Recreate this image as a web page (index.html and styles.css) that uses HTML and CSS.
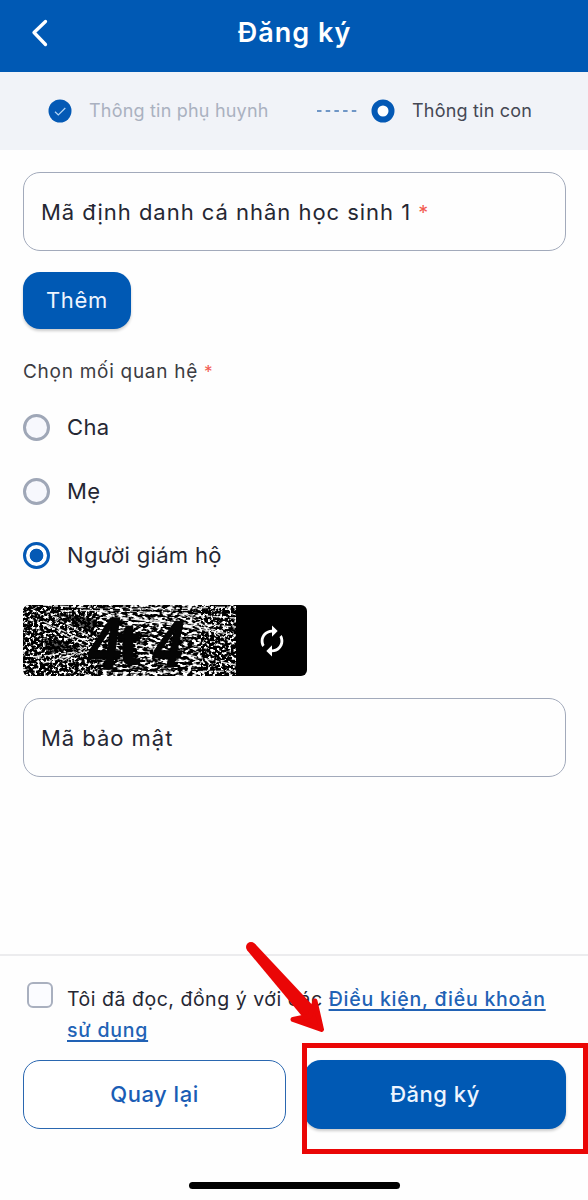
FILE: index.html
```html
<!DOCTYPE html>
<html lang="vi">
<head>
<meta charset="utf-8">
<title>Đăng ký</title>
<link rel="stylesheet" href="styles.css">
</head>
<body>
<div class="screen">
  <header class="topbar">
    <svg class="back" viewBox="0 0 20 30" aria-label="Quay lại"><path d="M16.500 3.500 5 14.500l11.500 12"/></svg>
    <h1 class="title">Đăng ký</h1>
  </header>

  <nav class="steps">
    <svg class="step-icon" viewBox="0 0 24 24"><circle cx="12" cy="12" r="11.500" fill="#0459b5"/><path d="m7 12.800 3.300 3.200 7-7" fill="none" stroke="#b5d6f5" stroke-width="1.200"/></svg>
    <span class="step-label done">Thông tin phụ huynh</span>
    <svg class="dashes" viewBox="0 0 40 2"><path d="M0 1h40" stroke="#4478b5" stroke-width="1.500" stroke-dasharray="4.500 4.200"/></svg>
    <svg class="step-icon" viewBox="0 0 24 24"><circle cx="12" cy="12" r="8.500" fill="#fff" stroke="#0459b5" stroke-width="6"/></svg>
    <span class="step-label">Thông tin con</span>
  </nav>

  <main class="form">
    <div class="field"><span class="field-label">Mã định danh cá nhân học sinh 1 <span class="req">*</span></span></div>
    <button class="btn add">Thêm</button>
    <p class="group-label">Chọn mối quan hệ <span class="req">*</span></p>
    <div class="radios">
      <div class="radio"><i class="dot"></i><span>Cha</span></div>
      <div class="radio"><i class="dot"></i><span>Mẹ</span></div>
      <div class="radio"><i class="dot checked"></i><span>Người giám hộ</span></div>
    </div>
    <div class="captcha">
      <svg class="captcha-image" viewBox="0 0 213 71">
        <defs>
          <filter id="grain" x="0" y="0" width="100%" height="100%" color-interpolation-filters="sRGB">
            <feTurbulence type="fractalNoise" baseFrequency="0.34 0.36" numOctaves="2" seed="8"/>
            <feColorMatrix values="7 0 0 0 -3.500  7 0 0 0 -3.500  7 0 0 0 -3.500  0 0 0 0 1"/>
          </filter>
          <filter id="streaks" x="0" y="0" width="100%" height="100%" color-interpolation-filters="sRGB">
            <feTurbulence type="fractalNoise" baseFrequency="0.2 0.4" numOctaves="2" seed="3"/>
            <feColorMatrix values="6 0 0 0 -2.700  6 0 0 0 -2.700  6 0 0 0 -2.700  0 0 0 0 1"/>
          </filter>
        </defs>
        <rect width="213" height="71" filter="url(#grain)"/>
        <rect x="74" width="104" height="71" filter="url(#streaks)"/>
        <path class="shadows" d="M34 8 74 14 70 28zM20 34 56 42 24 50z"/>
        <path class="scratches" d="M20 0 213 13M40 6 213 2M60 4 200 26M20 16 66 38M28 10 70 34M10 52 62 46M40 56 72 36M24 20 64 42M80 12 213 22M110 14 213 30M20 58 66 46M90 68 213 66M115 40 213 60M160 8 213 40"/>
        <path class="gaps" d="M30 3 213 8M32 10 72 28M20 44 62 41M88 66 205 62M170 22 206 38M24 30 64 52"/>
        <g class="code">
          <text transform="translate(63 64) skewX(-8) scale(.78 1)" font-size="74">4</text>
          <text transform="translate(95 59) scale(1.150 1)" font-size="58">t</text>
          <text transform="translate(127 62) skewX(-12) scale(.78 1)" font-size="66">4</text>
        </g>
      </svg>
      <div class="refresh">
        <svg viewBox="0 0 24 24"><path d="M12 6v3l4-4-4-4v3c-4.420 0-8 3.580-8 8 0 1.570.46 3.030 1.240 4.260L6.700 14.800C6.250 13.970 6 13.010 6 12c0-3.310 2.690-6 6-6zm6.760 1.740L17.300 9.200c.44.84.7 1.790.7 2.800 0 3.310-2.690 6-6 6v-3l-4 4 4 4v-3c4.420 0 8-3.580 8-8 0-1.570-.46-3.030-1.240-4.260z"/></svg>
      </div>
    </div>
    <div class="field"><span class="field-label">Mã bảo mật</span></div>
  </main>

  <footer class="footer">
    <div class="terms">
      <i class="checkbox"></i>
      <p class="terms-text">Tôi đã đọc, đồng ý với các <a class="link">Điều kiện, điều khoản</a><br><a class="link">sử dụng</a></p>
    </div>
    <div class="actions">
      <button class="btn outline">Quay lại</button>
      <button class="btn primary">Đăng ký</button>
    </div>
    <div class="home-indicator"></div>
  </footer>

  <svg class="arrow" viewBox="0 0 90 104"><circle cx="11" cy="12" r="5"/><path d="M7.300 15.500 66 86 78 76 14.700 8.500z"/><path class="head" d="M53 84.500 81.500 94.500 75 66 70 81z"/></svg>
  <div class="highlight"></div>
</div>
</body>
</html>
```
FILE: styles.css
```css
* { box-sizing: border-box; }
body { margin: 0; background: #fefefe; font-family: Inter, "Noto Sans", sans-serif; color: #252733; }
.screen { position: relative; width: 588px; height: 1200px; display: flex; flex-direction: column; overflow: hidden; }
p, h1 { margin: 0; }

.topbar { height: 72px; flex: none; display: grid; grid-template-columns: 60px 1fr 60px; align-items: center; padding-bottom: 7px; background: #0059b4; color: #fff; }
.back { width: 20px; height: 30px; margin-left: 29px; fill: none; stroke: #fff; stroke-width: 3.300; stroke-linecap: round; stroke-linejoin: round; }
.title { padding-left: 1px; text-align: center; font-size: 27px; font-weight: 600; letter-spacing: 1px; line-height: 34px; }

.steps { height: 78px; flex: none; display: flex; align-items: center; padding-left: 48px; background: #f1f3f8; }
.step-icon { width: 24px; height: 24px; flex: none; }
.step-label { margin-left: 17px; padding-bottom: 2px; font-size: 18px; letter-spacing: .2px; white-space: nowrap; color: #454854; }
.step-label.done { width: 211px; color: #aab1c0; }
.dashes { width: 40px; height: 2px; margin: 0 14px 0 17px; }

.form { flex: 1; padding: 22px 22px 0 23px; }
.field { height: 79px; display: flex; align-items: center; padding: 0 0 0 17px; border: 1.500px solid #a2aabb; border-radius: 17px; font-size: 22px; letter-spacing: .97px; white-space: nowrap; }
.req { font-size: .9em; color: #f25b50; }
.btn { display: flex; align-items: center; justify-content: center; padding: 0; border: 0; border-radius: 17px; font: 500 22px Inter, "Noto Sans", sans-serif; letter-spacing: .5px; background: #0059b4; color: #eef5ff; box-shadow: 0 2px 3px #0003; }
.add { width: 108px; height: 57px; margin-top: 21px; padding-bottom: 2px; font-weight: 400; letter-spacing: .7px; }
.group-label { margin-top: 29px; font-size: 19px; line-height: 28px; letter-spacing: .72px; color: #3b3c42; }
.radios { margin-top: 9px; }
.radio { height: 64px; display: flex; align-items: center; gap: 17px; font-size: 22px; letter-spacing: .34px; }
.dot { width: 27px; height: 27px; border: 3px solid #9fa7b7; border-radius: 50%; background: #f7f8fd; }
.dot.checked { border-color: #0459b5; background: radial-gradient(circle, #0459b5 6.500px, #fff 7.200px); }

.captcha { width: 284px; height: 71px; margin: 18px 0 22px; display: flex; border-radius: 6px; background: #000; overflow: hidden; }
.captcha-image { width: 213px; height: 71px; }
.scratches { stroke: #fff; stroke-width: 1.300; stroke-dasharray: 9 2 4 2; opacity: .85; fill: none; }
.gaps { stroke: #000; stroke-width: 1.600; stroke-dasharray: 7 3; fill: none; }
.shadows { fill: #000; opacity: .65; }
.code { font-family: "Liberation Sans", sans-serif; font-weight: 700; fill: #050505; stroke: #050505; stroke-width: 1.500; }
.refresh { flex: 1; display: flex; align-items: center; justify-content: center; }
.refresh svg { width: 34px; height: 34px; fill: #fff; }

.footer { height: 246px; flex: none; padding: 26px 22px 0 23px; border-top: 2px solid #ececee; }
.terms { display: flex; height: 78px; }
.checkbox { width: 26px; height: 26px; flex: none; margin: 0 14px 0 4px; border: 2px solid #a9b0bf; border-radius: 6px; background: #fbfcff; }
.terms-text { padding-top: 2px; font-size: 19.500px; line-height: 31px; letter-spacing: .52px; white-space: nowrap; }
.link { color: #2162b5; font-weight: 500; letter-spacing: .78px; text-decoration: underline 2px; text-underline-offset: 3px; text-decoration-skip-ink: none; }
.actions { display: flex; gap: 18px; }
.actions .btn { height: 69px; padding-bottom: 1px; }
.actions .outline { width: 263px; border: 1.500px solid #2a67b0; background: #fff; color: #1a5db5; box-shadow: none; }
.primary { flex: 1; }
.home-indicator { width: 211px; height: 7px; margin: 53px 0 0 166px; border-radius: 4px; background: #000; }

.arrow { position: absolute; left: 240px; top: 935px; width: 90px; height: 104px; fill: #ea0606; }
.arrow .head { stroke: #ea0606; stroke-width: 5; stroke-linejoin: round; }
.highlight { position: absolute; left: 302px; top: 1043px; width: 286px; height: 111px; border: 5px solid #ea0606; }
```
